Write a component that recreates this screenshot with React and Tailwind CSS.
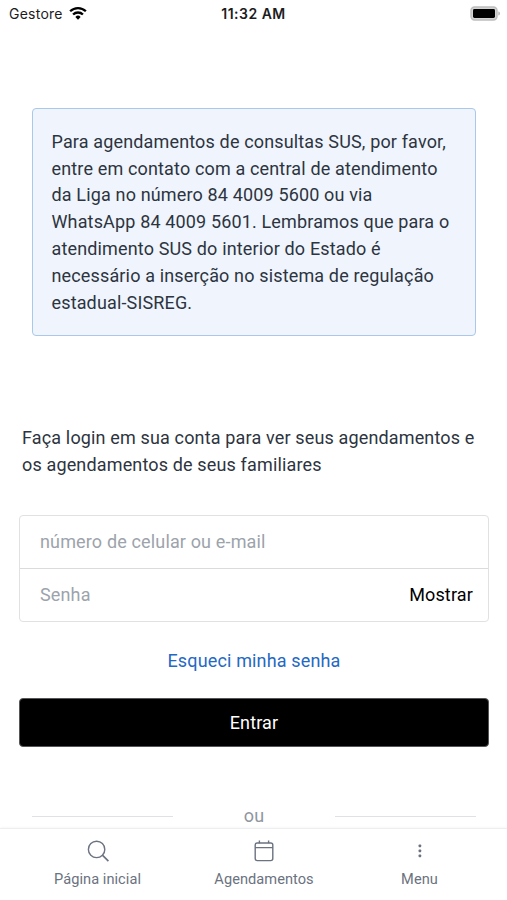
import React, { useState } from 'react';

const StatusBar = () => (
  <header className="grid h-7 grid-cols-3 items-center pl-[9px] pr-[6px] font-['Inter'] text-sm text-[#1c1c1e]">
    <div className="flex items-center gap-[6px]">
      <span className="text-[14px] tracking-[0.25px]">Gestore</span>
      <svg className="h-[14px] w-[18px] -translate-y-px text-black" viewBox="0 0 19 14" fill="none" stroke="currentColor" strokeWidth="2.4" aria-hidden="true">
        <path d="M1.2 5.2a11.8 11.8 0 0 1 16.6 0" />
        <path d="M4.3 8.6a7.4 7.4 0 0 1 10.4 0" />
        <path d="M9.5 14 6.7 11.2a3.9 3.9 0 0 1 5.6 0z" fill="currentColor" stroke="none" />
      </svg>
    </div>
    <span className="-ml-[3px] text-center text-[14px] font-semibold tracking-[0.5px] whitespace-nowrap">11:32 AM</span>
    <svg className="h-[15px] w-[31px] -translate-y-px justify-self-end" viewBox="0 0 31 15" aria-hidden="true">
      <rect x="1" y="1" width="26" height="13" rx="3.5" fill="#d4d4d4" stroke="#bdbdbd" strokeWidth="1.4" />
      <rect x="3" y="3" width="22" height="9" rx="1.4" fill="#000" />
      <path d="M28.4 5.5c2 .6 2 3.4 0 4z" fill="#b0b0b0" />
    </svg>
  </header>
);

const Divider = () => (
  <div className="flex h-7 items-center justify-between pr-[31px] pl-8 text-[18px] text-[#9096a0]">
    <span className="h-px w-[141px] translate-y-px bg-[#dfe1e4]" />
    <span>ou</span>
    <span className="h-px w-[141px] translate-y-px bg-[#dfe1e4]" />
  </div>
);

const SearchIcon = () => (
  <svg className="h-6 w-6" viewBox="0 0 24 24" fill="none" stroke="currentColor" strokeWidth="1.4" aria-hidden="true">
    <circle cx="10.6" cy="10.4" r="8.2" />
    <path d="m16.4 16.2 6 6" strokeWidth="1.7" />
  </svg>
);

const CalendarIcon = () => (
  <svg className="h-6 w-6" viewBox="0 0 24 24" fill="none" stroke="currentColor" strokeWidth="1.4" aria-hidden="true">
    <rect x="3.2" y="4" width="17.6" height="17.6" rx="2" />
    <path d="M3 8.6h18M7.4 1.6v2.6M16.6 1.6v2.6" />
  </svg>
);

const MenuIcon = () => (
  <svg className="h-6 w-6" viewBox="0 0 24 24" fill="currentColor" aria-hidden="true">
    <rect x="10.6" y="5.6" width="2.6" height="2.6" rx="0.7" />
    <rect x="10.6" y="10.6" width="2.6" height="2.6" rx="0.7" />
    <rect x="10.6" y="15.6" width="2.6" height="2.6" rx="0.7" />
  </svg>
);

const TabBar = () => (
  <nav className="relative flex h-[72px] border-t border-[#eceef0] bg-white pl-[17px] pr-[7px] text-[14.6px] tracking-[0.05px] text-[#6b7280] shadow-[0_-1px_2px_rgba(0,0,0,0.03)]">
    <a href="#inicio" className="flex w-[161px] flex-col items-center pt-[10px]">
      <SearchIcon />
      <span className="mt-[6px] leading-5">Página inicial</span>
    </a>
    <a href="#agendamentos" className="flex w-[172px] flex-col items-center pt-[10px]">
      <CalendarIcon />
      <span className="mt-[6px] leading-5">Agendamentos</span>
    </a>
    <a href="#menu" className="flex w-[139px] flex-col items-center pt-[10px]">
      <MenuIcon />
      <span className="mt-[6px] leading-5">Menu</span>
    </a>
  </nav>
);

const App = () => {
  const [showPassword, setShowPassword] = useState(false);

  return (
    <div className="flex h-[900px] w-[507px] flex-col overflow-hidden bg-white font-['Roboto',sans-serif] text-[18px] tracking-[0.15px] text-[#2d3440]">
      <StatusBar />

      <main className="h-[800px] shrink-0">
        {/* SUS notice */}
        <p className="mx-8 mt-20 h-[228px] w-[444px] rounded-[4px] border-[1.5px] border-[#a9c8ea] bg-[#eff4fd] pl-[18.5px] pt-[19.7px] leading-[26.85px] whitespace-nowrap">
          Para agendamentos de consultas SUS, por favor,<br />
          entre em contato com a central de atendimento<br />
          da Liga no número 84 4009 5600 ou via<br />
          WhatsApp 84 4009 5601. Lembramos que para o<br />
          atendimento SUS do interior do Estado é<br />
          necessário a inserção no sistema de regulação<br />
          estadual-SISREG.
        </p>

        <p className="mt-[89px] pl-[22px] leading-[26.85px] whitespace-nowrap">
          Faça login em sua conta para ver seus agendamentos e<br />
          os agendamentos de seus familiares
        </p>

        <form className="mt-[36px] pr-[18px] pl-[19px]" onSubmit={(e) => e.preventDefault()}>
          <div className="h-[107px] rounded-[4px] border border-[#dfe1e3]">
            <input
              type="text"
              placeholder="número de celular ou e-mail"
              className="block h-[53px] w-full border-b border-[#d9dbdd] px-5 tracking-[0.15px] outline-none placeholder:text-[#9ca3ab]"
            />
            <div className="flex h-[52px] items-center pr-[15px] pl-5">
              <input
                type={showPassword ? 'text' : 'password'}
                placeholder="Senha"
                className="min-w-0 flex-1 tracking-[0.15px] outline-none placeholder:text-[#9ca3ab]"
              />
              <button type="button" className="text-black" onClick={() => setShowPassword(!showPassword)}>
                Mostrar
              </button>
            </div>
          </div>
          <a href="#senha" className="mt-[25px] block text-center leading-7 text-[#2468c4]">Esqueci minha senha</a>
          <button type="submit" className="mt-[23px] h-[49px] w-full rounded-[4px] border border-[#55565a] bg-black text-white">
            Entrar
          </button>
        </form>

        <div className="mt-[55px]">
          <Divider />
        </div>
      </main>

      <TabBar />
    </div>
  );
};

export default App;
